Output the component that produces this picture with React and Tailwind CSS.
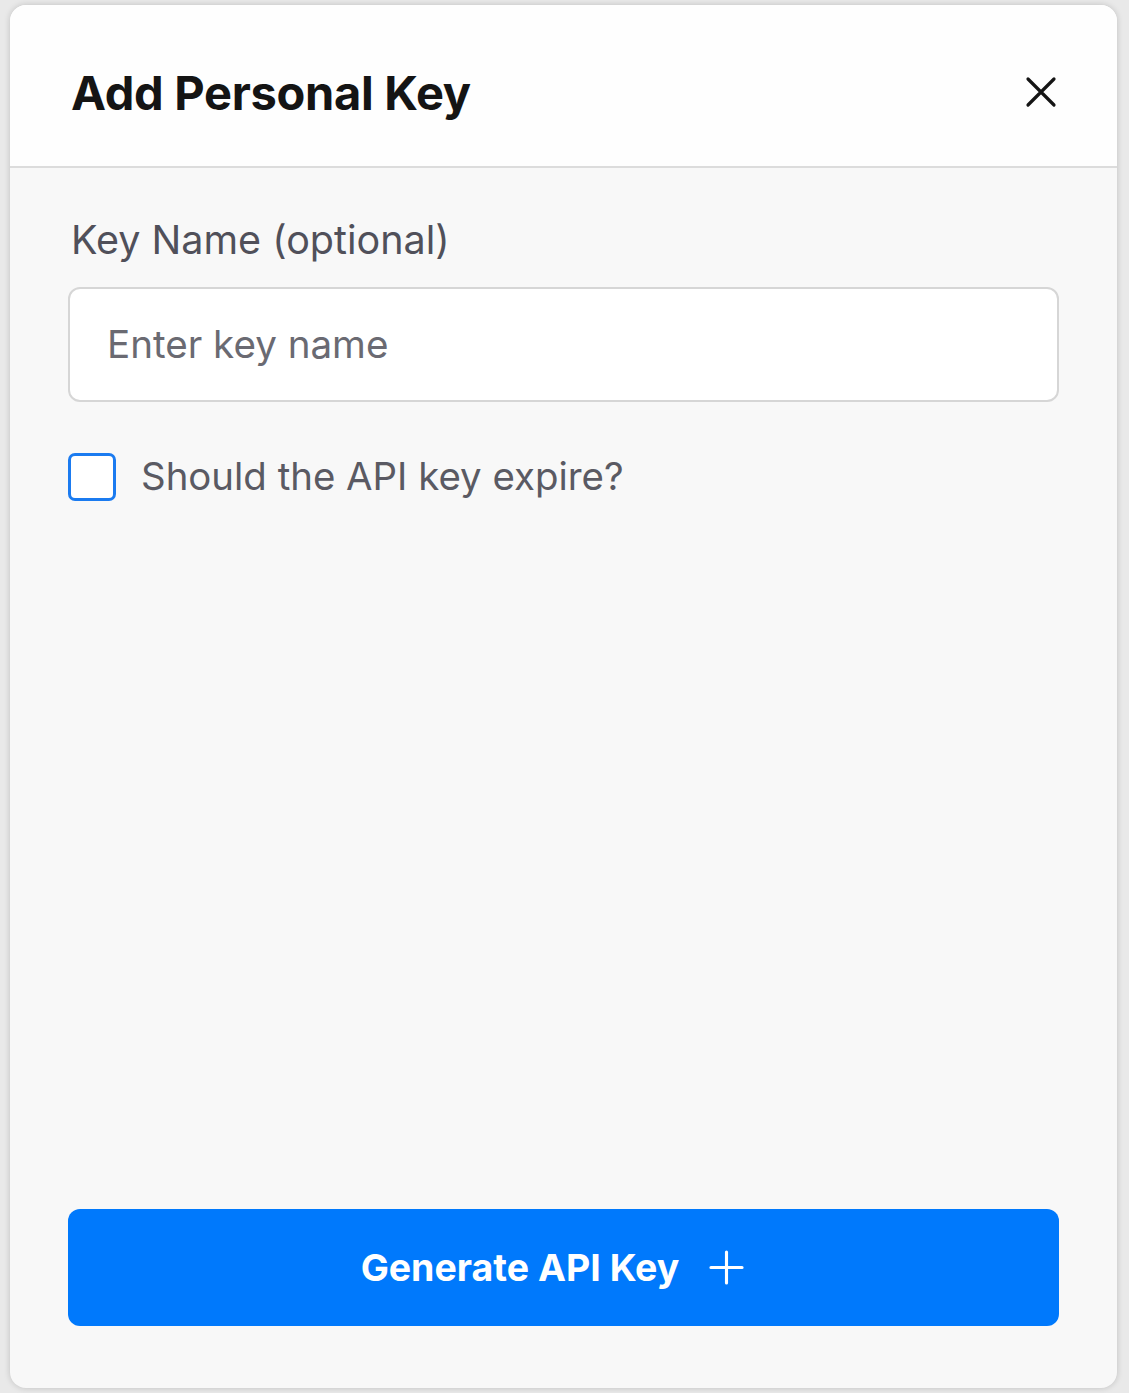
import React from "react";

export default function App() {
  return (
    <div className="w-[1129px] h-[1393px] bg-[#e9e9e9] pt-[5px] pl-[10px] pr-[12px] pb-[5px] overflow-hidden" style={{ fontFamily: "Inter, 'Noto Sans', sans-serif" }}>
      <div className="relative w-full h-full rounded-[16px] bg-[#f8f8f8] shadow-[0_0_6px_rgba(0,0,0,0.18)] flex flex-col overflow-hidden">
        <div className="h-[163px] bg-[#fefefe] border-b-2 border-[#dcdcdc] flex items-center justify-between pl-[61px] pr-[60px] pt-[13px] shrink-0">
          <h1 className="text-[47px] font-bold text-[#141414] tracking-[-0.3px] leading-none">Add Personal Key</h1>
          <button className="w-[32px] h-[32px] flex items-center justify-center">
            <svg width="32" height="32" viewBox="0 0 32 32" fill="none" stroke="#141414" strokeWidth="3.2" strokeLinecap="round">
              <path d="M3 3 L29 29 M29 3 L3 29" />
            </svg>
          </button>
        </div>
        <div className="flex-1 flex flex-col px-[58px] pt-[53px] pb-[62px]">
          <label className="text-[39.5px] text-[#50505a] leading-none pl-[3px]">Key Name (optional)</label>
          <div className="mt-[26px] h-[115px] rounded-[12px] border-2 border-[#d6d6d6] bg-white flex items-center pl-[37px]">
            <span className="text-[38.6px] text-[#6a6a72] leading-none">Enter key name</span>
          </div>
          <div className="mt-[51px] flex items-center gap-[25px]">
            <div className="w-[48px] h-[48px] rounded-[7px] border-[3px] border-[#1b7bf0] bg-white" />
            <span className="text-[38.4px] text-[#5a5a63] leading-none">Should the API key expire?</span>
          </div>
          <div className="flex-1" />
          <button className="h-[117px] w-full rounded-[12px] bg-[#0079fc] flex items-center justify-center gap-[30px] pr-[22px]">
            <span className="text-[37.5px] font-bold text-white leading-none">Generate API Key</span>
            <svg width="35" height="35" viewBox="0 0 36 36" fill="none" stroke="white" strokeWidth="3.2" strokeLinecap="round">
              <path d="M18 2 V34 M2 18 H34" />
            </svg>
          </button>
        </div>
      </div>
    </div>
  );
}
